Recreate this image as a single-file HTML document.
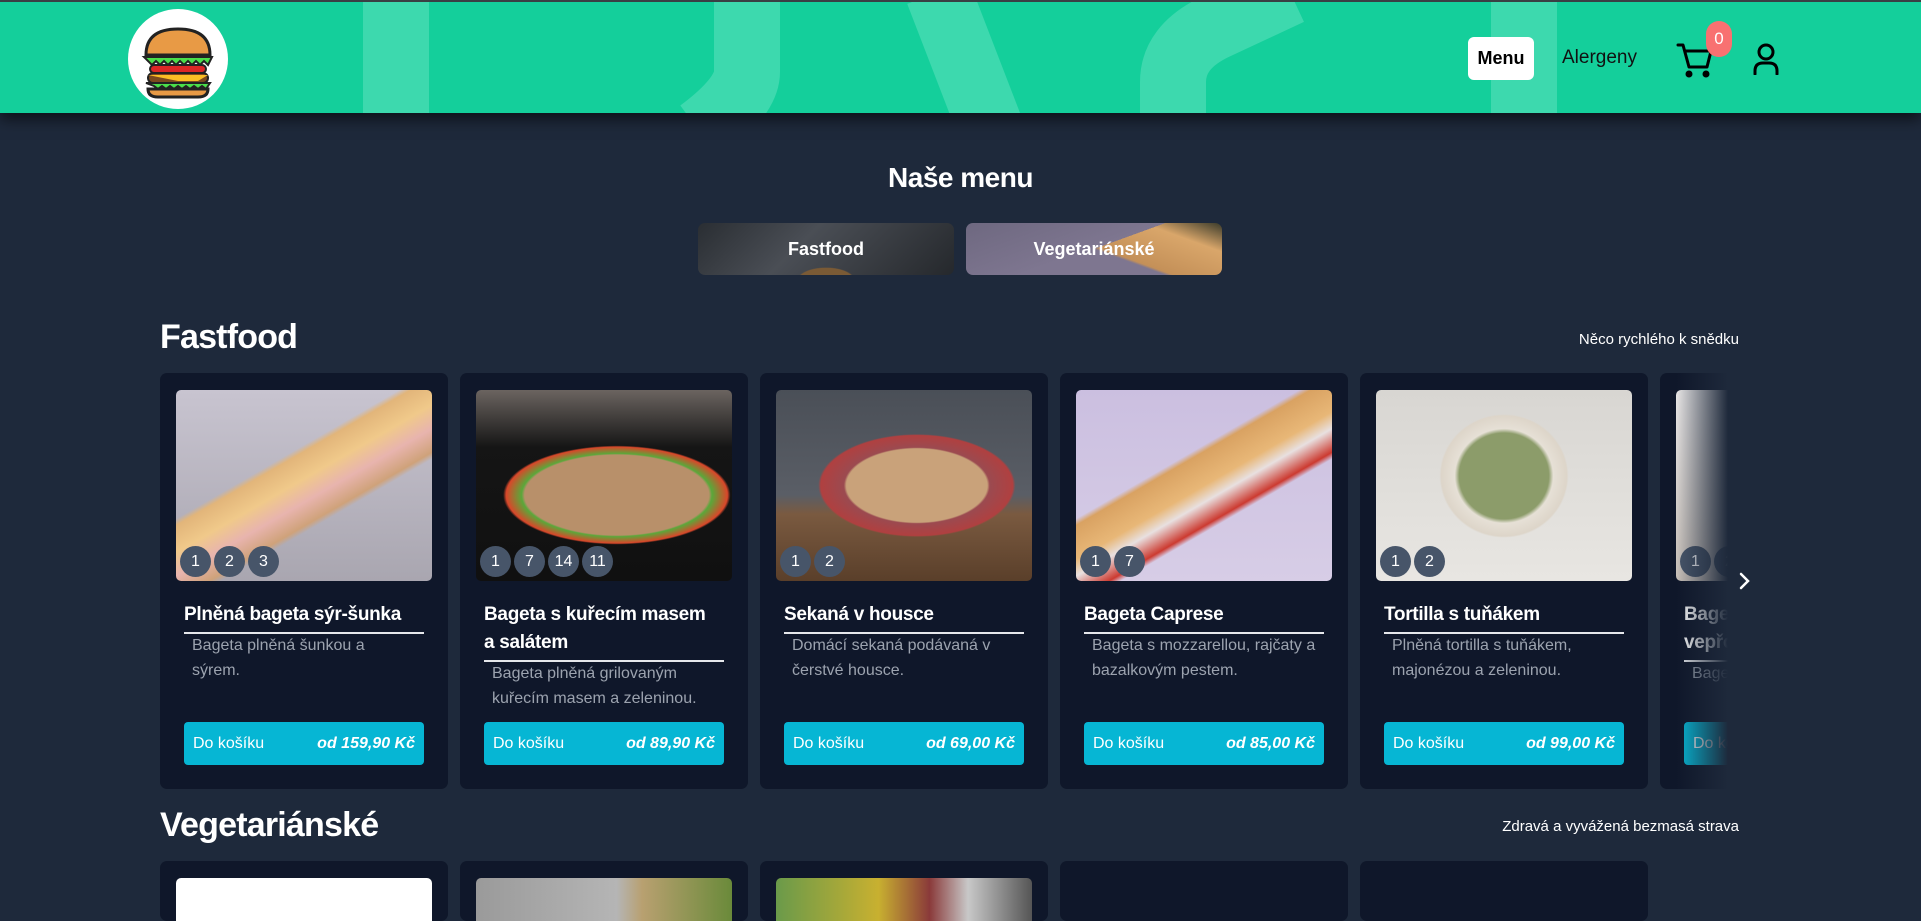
<!DOCTYPE html>
<html style="width:1921px;height:921px;overflow:hidden"><head><meta charset="utf-8"><style>
*{box-sizing:border-box;margin:0;padding:0}
body{width:1921px;height:921px;overflow:hidden;background:#1e293b;font-family:"Liberation Sans",sans-serif;color:#fff;position:relative}
.hdr{position:absolute;left:0;top:0;width:1921px;height:113px;background:#14cf9b;border-top:2px solid #3a3f44;box-shadow:0 6px 14px rgba(0,0,0,.6);overflow:hidden;z-index:2}
.logo{position:absolute;left:128px;top:7px;width:100px;height:100px;border-radius:50%;background:#fff}
.menu{position:absolute;left:1468px;top:35px;width:66px;height:43px;background:#fff;border-radius:6px;color:#000;font-weight:bold;font-size:18px;line-height:43px;text-align:center}
.alg{position:absolute;left:1562px;top:45px;font-size:19px;color:#111}
.badge{position:absolute;left:1706px;top:19px;width:26px;height:36px;border-radius:13px;background:#f87171;color:#fff;font-size:17px;text-align:center;line-height:36px}
h1{position:absolute;left:0;width:1921px;top:162px;text-align:center;font-size:28px;font-weight:bold;letter-spacing:-.5px}
.cat{position:absolute;top:223px;width:256px;height:52px;border-radius:7px;font-weight:bold;font-size:18px;text-align:center;line-height:52px;overflow:hidden}
h2{position:absolute;left:160px;font-size:34px;font-weight:bold;letter-spacing:-.8px}
.sub{position:absolute;right:182px;font-size:15px}
.card{position:absolute;width:288px;height:416px;background:#0f172a;border-radius:7px;overflow:hidden}
.img{position:absolute;left:16px;top:17px;width:256px;height:191px;border-radius:5px;overflow:hidden}
.al{position:absolute;bottom:4px;left:4px;display:flex;gap:3px}
.al span{min-width:31px;height:31px;border-radius:16px;background:#475569;color:#fff;font-size:16px;text-align:center;line-height:31px;padding:0 6px}
.t{position:absolute;left:24px;top:228px;width:240px;font-size:19px;font-weight:bold;line-height:28px;padding-bottom:3px;border-bottom:2px solid #e5e7eb;letter-spacing:-.3px}
.d{position:absolute;left:32px;width:215px;font-size:16px;line-height:24.5px;color:#9ca3af}
.b{position:absolute;left:24px;top:349px;width:240px;height:43px;background:#06b6d4;border-radius:4px;font-size:16px;line-height:43px;padding:0 9px;display:flex;justify-content:space-between}
.b i{font-weight:bold;font-style:italic}
.fade{position:absolute;left:1676px;top:365px;width:245px;height:430px;background:linear-gradient(90deg,rgba(30,41,59,0),#1e293b 52px);z-index:1}
.r2{height:60px}
</style></head><body>
<div class="hdr">
<svg width="1921" height="113" style="position:absolute;left:0;top:0" fill="none" stroke="#3dd9ae" stroke-width="66">
<path d="M396 -10V130"/>
<path d="M747 -10V70Q747 95 700 130"/>
<path d="M938 -10L992 130"/>
<path d="M1173 130V80Q1173 45 1215 25L1290 -10"/>
<path d="M1524 -10V130"/>
</svg>
<div class="logo">
<svg width="100" height="100" viewBox="0 0 100 100">
<path d="M18 46Q18 20 50 20Q82 20 82 46Z" fill="#e89a45" stroke="#222" stroke-width="3"/>
<path d="M16 48h68l-4 8l-4-4l-4 4l-4-4l-4 4l-4-4l-4 4l-4-4l-4 4l-4-4l-4 4l-4-4l-4 4l-4-4l-4 4z" fill="#4ade4a" stroke="#222" stroke-width="2"/>
<rect x="22" y="56" width="56" height="8" rx="4" fill="#dc2626" stroke="#222" stroke-width="2"/>
<rect x="20" y="64" width="60" height="10" rx="5" fill="#7c4a1e" stroke="#222" stroke-width="2"/>
<path d="M20 66h60l-10 6l-20 0z" fill="#fbbf24"/>
<path d="M18 74h64l-4 6l-4-3l-4 3l-4-3l-4 3l-4-3l-4 3l-4-3l-4 3l-4-3l-4 3l-4-3l-4 3l-4-3z" fill="#4ade4a" stroke="#222" stroke-width="2"/>
<path d="M20 80h60q0 8-10 8h-40q-10 0-10-8z" fill="#e89a45" stroke="#222" stroke-width="3"/>
</svg></div>
<div class="menu">Menu</div>
<div class="alg">Alergeny</div>
<svg style="position:absolute;left:1676px;top:40px" width="38" height="36" viewBox="0 0 38 36" fill="none" stroke="#000" stroke-width="3" stroke-linecap="round" stroke-linejoin="round"><path d="M2 3h5l6 22h18l4-16H9"/><circle cx="13" cy="32" r="2" fill="#000"/><circle cx="30" cy="32" r="2" fill="#000"/></svg>
<div class="badge">0</div>
<svg style="position:absolute;left:1752px;top:41px" width="28" height="32" viewBox="0 0 28 32" fill="none" stroke="#000" stroke-width="3" stroke-linecap="round"><circle cx="14" cy="9" r="7"/><path d="M3 31v-3q0-8 8-8h6q8 0 8 8v3"/></svg>
</div>
<h1>Naše menu</h1>
<div class="cat" style="left:698px;background:radial-gradient(ellipse at 50% 110%,#7a5a35 0 15%,transparent 16%),linear-gradient(135deg,#2a2e33,#4a4e55 40%,#25282c)">Fastfood</div>
<div class="cat" style="left:966px;background:linear-gradient(160deg,#6e6880,#7e7690 50%,transparent 50%),linear-gradient(20deg,#7e7690 50%,#c49058 52%,#d9a66a 80%,#3b3b2b)">Vegetariánské</div>

<h2 style="top:318px">Fastfood</h2>
<div class="sub" style="top:331px">Něco rychlého k snědku</div>

<div class="card" style="left:160px;top:373px"><div class="img" style="background:linear-gradient(150deg,transparent 38%,#e2b57a 40%,#f0c98a 48%,#e8b4ae 55%,#cfa27a 62%,transparent 64%),linear-gradient(#c8c4d0,#a9a6b0)"><div class="al"><span>1</span><span>2</span><span>3</span></div></div>
<div class="t">Plněná bageta sýr-šunka</div><div class="d" style="top:261px;width:190px">Bageta plněná šunkou a sýrem.</div><div class="b"><span>Do košíku</span><i>od 159,90 Kč</i></div></div>

<div class="card" style="left:460px;top:373px"><div class="img" style="background:radial-gradient(ellipse 60% 35% at 55% 55%,#b8906a 0 60%,#5aa83a 62%,#d9472a 72%,transparent 74%),linear-gradient(#6b6460,#151515 30%,#101010)"><div class="al"><span>1</span><span>7</span><span>14</span><span>11</span></div></div>
<div class="t">Bageta s kuřecím masem<br>a salátem</div><div class="d" style="top:289px">Bageta plněná grilovaným kuřecím masem a zeleninou.</div><div class="b"><span>Do košíku</span><i>od 89,90 Kč</i></div></div>

<div class="card" style="left:760px;top:373px"><div class="img" style="background:radial-gradient(ellipse 50% 35% at 55% 50%,#c9a27a 0 55%,#9b4a50 57%,#b04040 75%,transparent 77%),linear-gradient(#4a4f57,#5a5e66 55%,#7a5a40 65%,#5a3f2a)"><div class="al"><span>1</span><span>2</span></div></div>
<div class="t">Sekaná v housce</div><div class="d" style="top:261px">Domácí sekaná podávaná v čerstvé housce.</div><div class="b"><span>Do košíku</span><i>od 69,00 Kč</i></div></div>

<div class="card" style="left:1060px;top:373px"><div class="img" style="background:linear-gradient(150deg,transparent 38%,#d9a262 40%,#e8b777 50%,#e8e0e0 55%,#cc3a30 62%,transparent 64%),linear-gradient(#cbbfe0,#d7cde6)"><div class="al"><span>1</span><span>7</span></div></div>
<div class="t">Bageta Caprese</div><div class="d" style="top:261px;width:225px">Bageta s mozzarellou, rajčaty a bazalkovým pestem.</div><div class="b"><span>Do košíku</span><i>od 85,00 Kč</i></div></div>

<div class="card" style="left:1360px;top:373px"><div class="img" style="background:radial-gradient(ellipse 35% 45% at 50% 45%,#8c9c6a 0 50%,#e6e0d6 55%,#ddd5c9 70%,transparent 72%),linear-gradient(#d8d6d2,#e8e6e2)"><div class="al"><span>1</span><span>2</span></div></div>
<div class="t">Tortilla s tuňákem</div><div class="d" style="top:261px">Plněná tortilla s tuňákem, majonézou a zeleninou.</div><div class="b"><span>Do košíku</span><i>od 99,00 Kč</i></div></div>

<div class="card" style="left:1660px;top:373px"><div class="img" style="background:linear-gradient(#e8e6e6,#c8c0b8)"><div class="al"><span>1</span><span>2</span></div></div>
<div class="t">Bageta s trhaným<br>vepřovým masem</div><div class="d" style="top:289px">Bageta s trhaným masem</div><div class="b"><span>Do košíku</span><i></i></div></div>
<div class="fade"></div>
<svg style="position:absolute;left:1737px;top:571px;z-index:2" width="14" height="20" viewBox="0 0 14 20" fill="none" stroke="#fff" stroke-width="2.5" stroke-linecap="round"><path d="M4 3l7 7l-7 7"/></svg>

<h2 style="top:806px">Vegetariánské</h2>
<div class="sub" style="top:818px">Zdravá a vyvážená bezmasá strava</div>
<div class="card r2" style="left:160px;top:861px"><div class="img" style="background:#fff"></div></div>
<div class="card r2" style="left:460px;top:861px"><div class="img" style="background:linear-gradient(90deg,#9a9a9a,#b5b5b5 55%,#b8a070 65%,#6a8a3a)"></div></div>
<div class="card r2" style="left:760px;top:861px"><div class="img" style="background:linear-gradient(90deg,#6a9a4a,#c8b030 40%,#8a3a3a 60%,#c8c8c8 75%,#555)"></div></div>
<div class="card r2" style="left:1060px;top:861px"></div>
<div class="card r2" style="left:1360px;top:861px"></div>
</body></html>
